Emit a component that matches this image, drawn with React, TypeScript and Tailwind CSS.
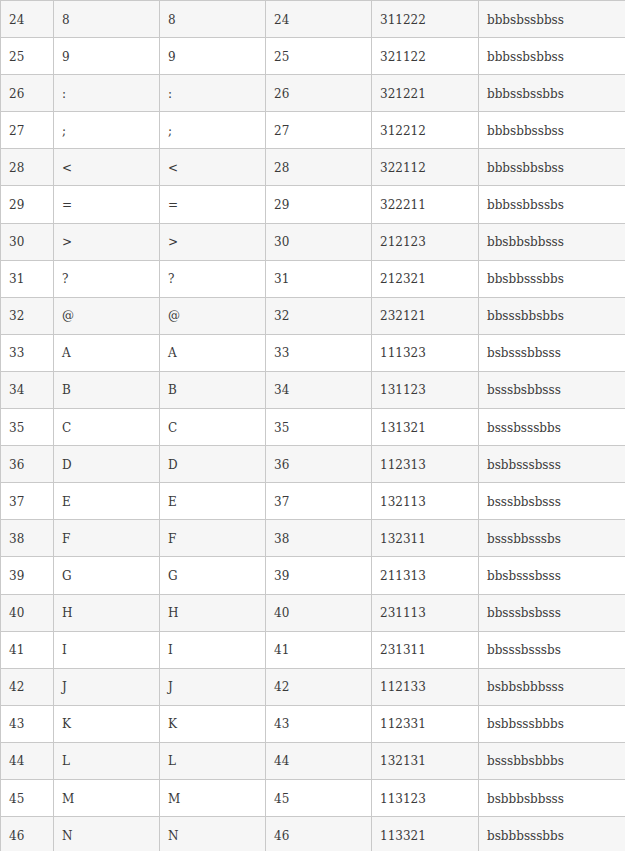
const rows: [number, string, string, string][] = [
  [24, '8', '311222', 'bbbsbssbbss'],
  [25, '9', '321122', 'bbbssbsbbss'],
  [26, ':', '321221', 'bbbssbssbbs'],
  [27, ';', '312212', 'bbbsbbssbss'],
  [28, '<', '322112', 'bbbssbbsbss'],
  [29, '=', '322211', 'bbbssbbssbs'],
  [30, '>', '212123', 'bbsbbsbbsss'],
  [31, '?', '212321', 'bbsbbsssbbs'],
  [32, '@', '232121', 'bbsssbbsbbs'],
  [33, 'A', '111323', 'bsbsssbbsss'],
  [34, 'B', '131123', 'bsssbsbbsss'],
  [35, 'C', '131321', 'bsssbsssbbs'],
  [36, 'D', '112313', 'bsbbsssbsss'],
  [37, 'E', '132113', 'bsssbbsbsss'],
  [38, 'F', '132311', 'bsssbbsssbs'],
  [39, 'G', '211313', 'bbsbsssbsss'],
  [40, 'H', '231113', 'bbsssbsbsss'],
  [41, 'I', '231311', 'bbsssbsssbs'],
  [42, 'J', '112133', 'bsbbsbbbsss'],
  [43, 'K', '112331', 'bsbbsssbbbs'],
  [44, 'L', '132131', 'bsssbbsbbbs'],
  [45, 'M', '113123', 'bsbbbsbbsss'],
  [46, 'N', '113321', 'bsbbbsssbbs'],
];

const cell = 'flex items-center border-l border-[#c9c9c9] pl-2 pt-[1px]';

export default function App() {
  return (
    <div
      className="h-[851px] w-[625px] overflow-hidden bg-white text-[12px] text-[#3a3a3a]"
      style={{ fontFamily: '"DejaVu Serif", "Liberation Serif", serif' }}
    >
      {rows.map(([code, ch, pattern, bars], i) => (
        <div
          key={code}
          className={`flex h-[37.1px] border-t border-[#c9c9c9] ${
            i % 2 === 0 ? 'bg-[#f6f6f6]' : 'bg-white'
          }`}
        >
          <div className={`${cell} w-[53px]`}>{code}</div>
          <div className={`${cell} w-[106px]`}>{ch}</div>
          <div className={`${cell} w-[106px]`}>{ch}</div>
          <div className={`${cell} w-[106px]`}>{code}</div>
          <div className={`${cell} w-[107px]`}>{pattern}</div>
          <div className={`${cell} flex-1`}>{bars}</div>
        </div>
      ))}
    </div>
  );
}
